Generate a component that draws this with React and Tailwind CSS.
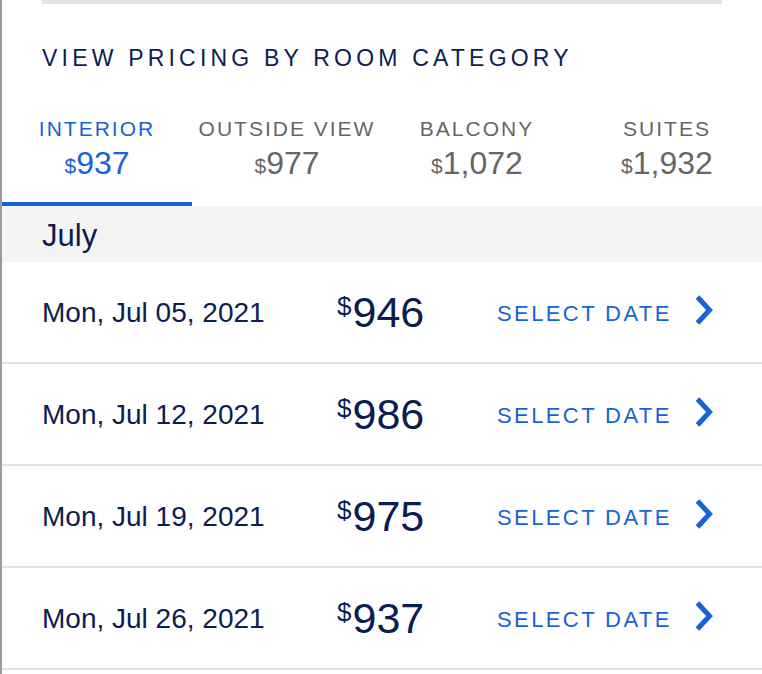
import React from 'react';

const TABS = [
  { label: 'INTERIOR', price: '937', active: true },
  { label: 'OUTSIDE VIEW', price: '977' },
  { label: 'BALCONY', price: '1,072' },
  { label: 'SUITES', price: '1,932' },
];

const ROWS = [
  { date: 'Mon, Jul 05, 2021', price: '946' },
  { date: 'Mon, Jul 12, 2021', price: '986' },
  { date: 'Mon, Jul 19, 2021', price: '975' },
  { date: 'Mon, Jul 26, 2021', price: '937' },
];

function Chevron() {
  return (
    <svg width="20" height="32" viewBox="0 0 20 32" fill="none">
      <path d="M3.5 3L15.5 16L3.5 29" stroke="#1762d6" strokeWidth="5" strokeLinejoin="miter" />
    </svg>
  );
}

export default function App() {
  return (
    <div
      className="w-[762px] h-[674px] overflow-hidden bg-white border-l-2 border-[#9b9b9b]"
      style={{ fontFamily: '"Liberation Sans", Arial, sans-serif' }}
    >
      <div className="ml-[40px] w-[680px] h-[4px] bg-[#e4e4e4]" />

      <h2 className="mt-[40px] pl-[40px] text-[23px] leading-[28px] tracking-[4.2px] text-[#0b1d51]">
        VIEW PRICING BY ROOM CATEGORY
      </h2>

      {/* Room category tabs */}
      <div className="mt-[45px] grid grid-cols-4">
        {TABS.map((t) => (
          <div
            key={t.label}
            className={`flex flex-col items-center pb-[21px] border-b-4 ${
              t.active ? 'border-[#1762d6] text-[#1762d6]' : 'border-transparent text-[#666666]'
            }`}
          >
            <span className="text-[21px] leading-[24px] tracking-[2px]">{t.label}</span>
            <span className="mt-[4px] flex items-start leading-[36px]">
              <span className="text-[21px] leading-[21px] mt-[10px]">$</span>
              <span className="text-[32px]">{t.price}</span>
            </span>
          </div>
        ))}
      </div>

      <div className="h-[56px] bg-[#f4f4f4] pl-[40px] pt-[5px] flex items-center text-[31px] text-[#0b1d51]">
        July
      </div>

      {ROWS.map((r) => (
        <div key={r.date} className="h-[102px] border-b-2 border-[#e0e0e0] flex items-center text-[#0b1d51]">
          <span className="pl-[40px] w-[335px] text-[28px] pt-[2px]">{r.date}</span>
          <span className="w-[160px] flex items-start leading-[48px]">
            <span className="text-[26px] leading-[26px] mt-[5px] mr-[1px]">$</span>
            <span className="text-[43px]">{r.price}</span>
          </span>
          <span className="text-[22px] tracking-[2.4px] text-[#1762d6] pt-[2px]">SELECT DATE</span>
          <span className="ml-[22px] mb-[4px]">
            <Chevron />
          </span>
        </div>
      ))}
    </div>
  );
}
